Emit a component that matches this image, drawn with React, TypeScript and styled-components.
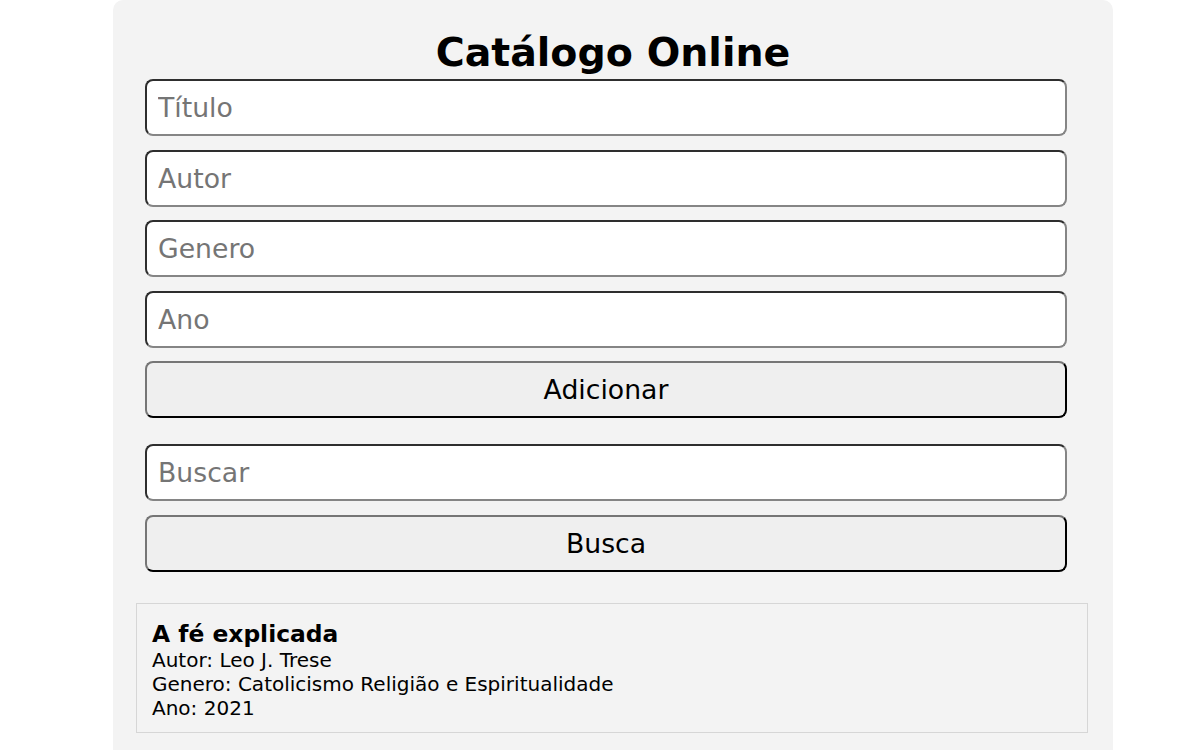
import React from "react";
import styled, { createGlobalStyle } from "styled-components";

const GlobalStyle = createGlobalStyle`
  html, body {
    margin: 0;
    padding: 0;
    background: #ffffff;
    font-family: "DejaVu Sans", Verdana, sans-serif;
  }
`;

const Page = styled.div`
  padding-left: 113px;
`;

const Container = styled.div`
  width: 1000px;
  min-height: 780px;
  box-sizing: border-box;
  background: #f3f3f3;
  border-radius: 10px;
  padding: 29px 0 0 0;
  display: flex;
  flex-direction: column;
`;

const Title = styled.h1`
  margin: 0 0 4px 0;
  font-size: 39.5px;
  font-weight: bold;
  text-align: center;
  color: #000;
  line-height: normal;
`;

const Form = styled.div`
  display: flex;
  flex-direction: column;
  gap: 13.5px;
  padding-left: 32px;
`;

const SearchForm = styled(Form)`
  margin-top: 26px;
  gap: 14px;
`;

const Input = styled.input`
  box-sizing: border-box;
  width: 922px;
  height: 57px;
  padding: 0 11px;
  border-width: 2px;
  border-style: solid;
  border-color: #2e2e2e #858585 #858585 #2e2e2e;
  border-radius: 8px;
  background: #fff;
  font-family: "DejaVu Sans", Verdana, sans-serif;
  font-size: 26.7px;
  color: #000;
  outline: none;
  &::placeholder {
    color: #757575;
  }
`;

const Button = styled.button`
  box-sizing: border-box;
  width: 922px;
  height: 57px;
  border-width: 2px;
  border-style: solid;
  border-color: #767676 #000 #000 #767676;
  border-radius: 8px;
  background: #efefef;
  font-family: "DejaVu Sans", Verdana, sans-serif;
  font-size: 26.7px;
  color: #000;
  padding: 0;
  cursor: pointer;
`;

const Results = styled.div`
  margin: 31px 0 0 23px;
  width: 952px;
`;

const BookCard = styled.div`
  box-sizing: border-box;
  border: 1px solid #d6d6d6;
  background: #f3f3f3;
  padding: 16px 15px 12px 15px;
  font-size: 20px;
  color: #000;
`;

const BookTitle = styled.h3`
  margin: 0;
  font-size: 23.4px;
  font-weight: bold;
  line-height: normal;
`;

const BookLine = styled.p`
  margin: 0;
  line-height: normal;
`;

const books = [
  {
    titulo: "A fé explicada",
    autor: "Leo J. Trese",
    genero: "Catolicismo Religião e Espiritualidade",
    ano: "2021",
  },
];

export default function App() {
  return (
    <>
      <GlobalStyle />
      <Page>
        <Container>
          <Title>Catálogo Online</Title>
          <Form>
            <Input placeholder="Título" />
            <Input placeholder="Autor" />
            <Input placeholder="Genero" />
            <Input placeholder="Ano" />
            <Button>Adicionar</Button>
          </Form>
          <SearchForm>
            <Input placeholder="Buscar" />
            <Button>Busca</Button>
          </SearchForm>
          <Results>
            {books.map((b) => (
              <BookCard key={b.titulo}>
                <BookTitle>{b.titulo}</BookTitle>
                <BookLine>Autor: {b.autor}</BookLine>
                <BookLine>Genero: {b.genero}</BookLine>
                <BookLine>Ano: {b.ano}</BookLine>
              </BookCard>
            ))}
          </Results>
        </Container>
      </Page>
    </>
  );
}
